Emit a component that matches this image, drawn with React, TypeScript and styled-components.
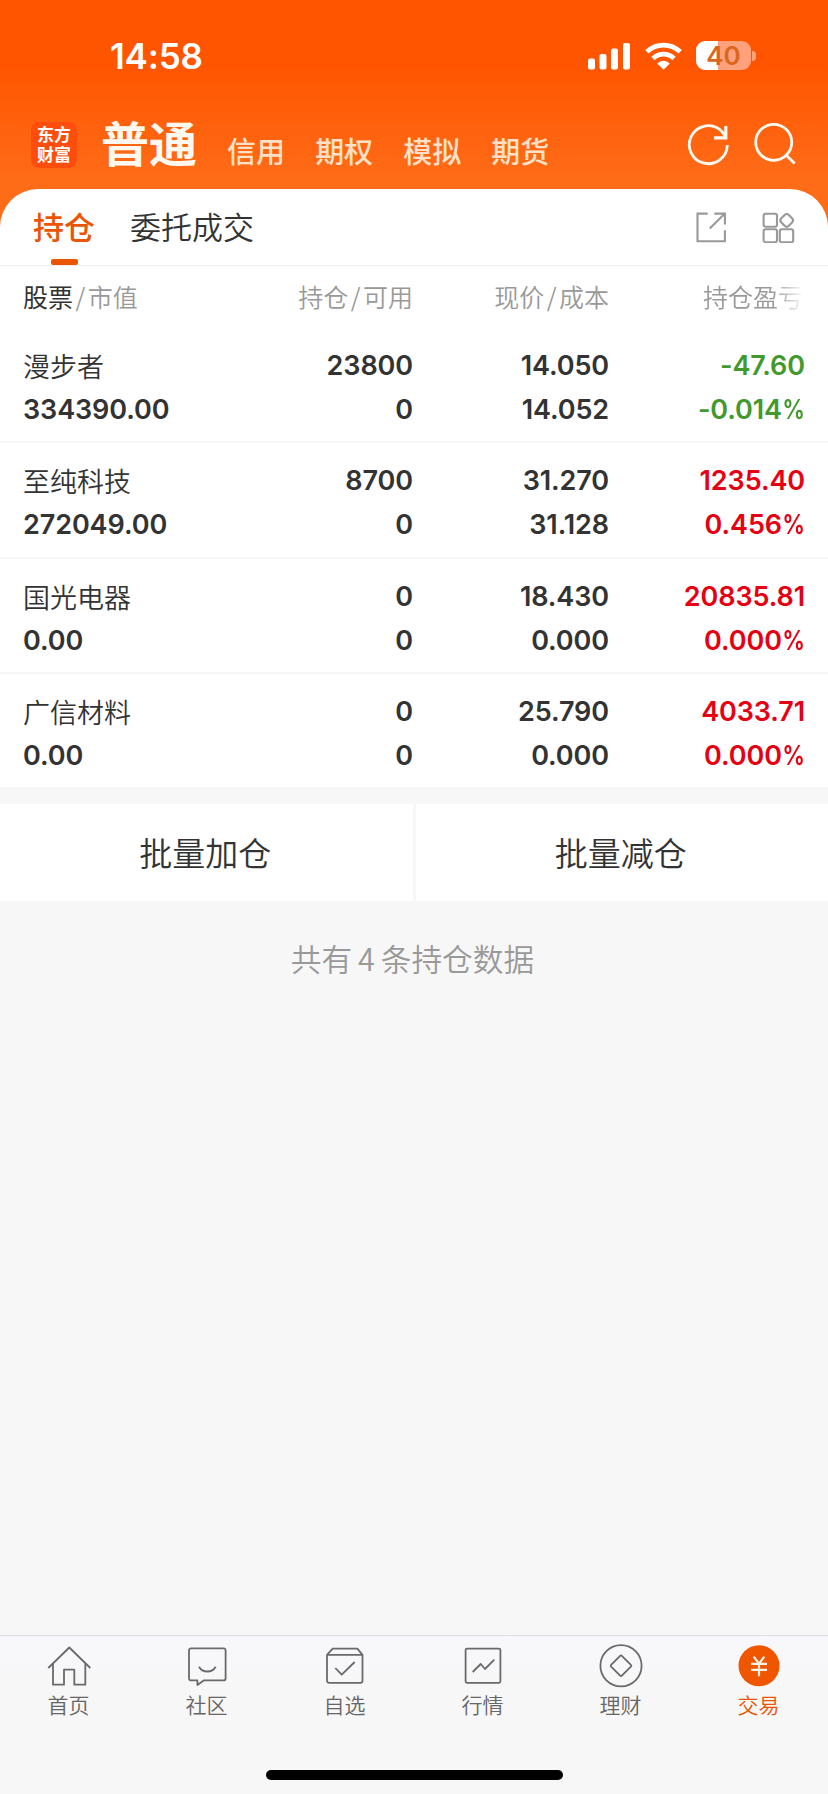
import React from "react";
import styled, { createGlobalStyle } from "styled-components";

const GlobalStyle = createGlobalStyle`
  * { box-sizing: border-box; }
  body { margin: 0; background: #f7f7f7; }
`;

const latin = `Inter, "Noto Sans CJK SC", sans-serif`;
const cjk = `"Noto Sans CJK SC", sans-serif`;

const Page = styled.div`
  width: 828px;
  height: 1794px;
  display: flex;
  flex-direction: column;
  overflow: hidden;
  font-family: ${cjk};
  color: #333;
  white-space: nowrap;
  background: linear-gradient(#ff5500 0, #ff5500 66px, #ff6c18 180px, #ff6c18 240px, #f7f7f7 240px);
`;

const StatusBar = styled.div`
  height: 98px;
  padding: 13px 72px 0 110px;
  display: flex;
  align-items: center;
  justify-content: space-between;
`;

const Clock = styled.div`
  font: 560 35px/40px ${latin};
  letter-spacing: -0.2px;
  color: #fff;
`;

const StatusIcons = styled.div`
  display: flex;
  align-items: center;
  gap: 14.5px;
  svg { display: block; }
`;

const Battery = styled.div`
  display: flex;
  align-items: center;
  gap: 1px;
`;

const BatteryBody = styled.div`
  width: 55px;
  height: 29px;
  border-radius: 9px;
  background: linear-gradient(90deg, #fff 22px, #ffa27c 22px);
  color: #dc661c;
  font: 600 26px/29px ${latin};
  text-align: center;
`;

const BatteryTip = styled.div`
  width: 4px;
  height: 10px;
  border-radius: 0 5px 5px 0;
  background: #ffa27c;
`;

const AccountBar = styled.div`
  height: 91px;
  padding: 0 31px;
  display: flex;
  align-items: flex-start;
`;

const Logo = styled.div`
  width: 46px;
  height: 46px;
  margin-top: 24px;
  padding-top: 2px;
  border-radius: 8px;
  background: #ff4d0d;
  color: #fff;
  font: 700 17px/20px ${cjk};
  text-align: center;
`;

const LogoLine = styled.span`
  display: block;
  height: 20px;
`;

const ActiveAccount = styled.div`
  margin: 14px 0 0 24px;
  font-size: 48px;
  line-height: 58px;
  font-weight: 700;
  color: #fff8ef;
`;

const Accounts = styled.div`
  display: flex;
  gap: 30.3px;
  margin: 31.5px auto 0 30px;
  font-size: 29px;
  line-height: 40px;
  font-weight: 500;
  letter-spacing: -0.1px;
  color: #ffe0c8;
`;

const AccountActions = styled.div`
  display: flex;
  gap: 23.5px;
  margin-top: 24px;
  svg { display: block; }
`;

const Sheet = styled.main`
  background: #fff;
  border-radius: 38px 38px 0 0;
`;

const TabBar = styled.div`
  height: 77px;
  padding: 0 32px 0 33px;
  display: flex;
  align-items: stretch;
  border-bottom: 1px solid #eee;
`;

const Tab = styled.div<{ $active?: boolean }>`
  display: flex;
  flex-direction: column;
  align-items: center;
  justify-content: space-between;
  margin-right: 35px;
  padding-top: 15px;
  font-size: 31px;
  line-height: 44px;
  font-weight: ${(p) => (p.$active ? 500 : 350)};
  color: ${(p) => (p.$active ? "#ea5504" : "#333")};
  &::after {
    content: "";
    width: 27px;
    height: 6px;
    border-radius: 2px;
    background: ${(p) => (p.$active ? "#ea5504" : "transparent")};
  }
`;

const TabActions = styled.div`
  display: flex;
  gap: 35px;
  margin: 22px 0 0 auto;
  svg { display: block; }
`;

const Grid = styled.div`
  display: grid;
  grid-template-columns: 201px 189px 196px 196px;
  padding: 0 23px;
`;

const TableHead = styled(Grid)`
  height: 62px;
  padding-top: 9.5px;
  font-size: 25px;
  line-height: 40px;
  font-weight: 350;
  color: #999;
`;

const HeadCell = styled.div<{ $right?: boolean; $fade?: boolean }>`
  display: flex;
  gap: 2.5px;
  justify-content: ${(p) => (p.$right ? "flex-end" : "flex-start")};
  ${(p) =>
    p.$fade &&
    `margin-left: 94px; overflow: hidden; justify-content: flex-start;
     mask-image: linear-gradient(90deg, #000 70px, transparent 102px);`}
`;

const HeadMain = styled.span`
  color: #333;
  font-weight: 400;
`;

const Position = styled(Grid)`
  height: 115.3px;
  padding-top: 16px;
  border-bottom: 2px solid #f5f5f5;
  grid-auto-rows: 44px;
`;

const Name = styled.div`
  font-size: 27px;
  line-height: 43px;
  font-weight: 350;
`;

const tones = { up: "#e60012", down: "#439a2c", plain: "#333" };

const Figure = styled.div<{ $tone?: keyof typeof tones; $left?: boolean }>`
  font: 560 27px/44px ${latin};
  letter-spacing: -0.1px;
  text-align: ${(p) => (p.$left ? "left" : "right")};
  color: ${(p) => tones[p.$tone ?? "plain"]};
`;

const PercentSign = styled.span`
  display: inline-block;
  margin-left: -4px;
  transform: scaleX(0.84);
  transform-origin: right;
`;

const BatchActions = styled.div`
  display: flex;
  gap: 3px;
  height: 97px;
  margin-top: 15px;
`;

const BatchButton = styled.button`
  flex: 1;
  border: 0;
  padding: 0 2px 1px 0;
  background: #fff;
  font: 350 33px/44px ${cjk};
  color: #333;
`;

const Summary = styled.p`
  margin: 35px 0 0;
  padding-right: 3px;
  text-align: center;
  font-size: 30.7px;
  line-height: 44px;
  font-weight: 350;
  color: #999;
  word-spacing: -1px;
`;

const BottomNav = styled.nav`
  height: 159px;
  margin-top: auto;
  border-top: 1px solid #dfdfe3;
  background: linear-gradient(#f8f8fc, #f7f7f7 60px);
  display: flex;
  flex-direction: column;
  align-items: center;
  justify-content: space-between;
`;

const NavItems = styled.div`
  display: flex;
  width: 100%;
`;

const NavItem = styled.div<{ $active?: boolean }>`
  flex: 1;
  display: flex;
  flex-direction: column;
  align-items: center;
  padding-top: 6px;
  color: ${(p) => (p.$active ? "#ea5504" : "#666")};
  svg { display: block; }
`;

const NavLabel = styled.span`
  font-size: 21px;
  line-height: 28px;
  font-weight: 350;
  margin-right: 1px;
`;

const HomeIndicator = styled.div`
  width: 297px;
  height: 10px;
  margin-bottom: 14.5px;
  border-radius: 5px;
  background: #000;
`;

const SignalIcon = () => (
  <svg width="42" height="28" viewBox="0 0 42 28" fill="#fff">
    <rect x="0" y="16.5" width="7" height="11" rx="2" />
    <rect x="11.5" y="12" width="7" height="15.5" rx="2" />
    <rect x="23" y="6.5" width="7" height="21" rx="2" />
    <rect x="35" y="1" width="7" height="26.5" rx="2" />
  </svg>
);

const WifiIcon = () => (
  <svg width="37" height="28" viewBox="0 0 37 28">
    <g fill="none" stroke="#fff" strokeWidth="4.8">
      <path d="M1.8 9.8a24 24 0 0 1 33.4 0" />
      <path d="M8 16.4a15.2 15.2 0 0 1 21 0" />
    </g>
    <path d="M12.2 21.4a9 9 0 0 1 12.6 0L18.5 27.8z" fill="#fff" />
  </svg>
);

const RefreshIcon = () => (
  <svg width="44" height="46" viewBox="0 0 44 46" fill="none" stroke="#fffaf4" strokeWidth="2.8">
    <path d="M41.3 23A19 19 0 1 1 33.6 7.4Q37 10 39.4 14.6" />
    <path d="M39.8 4v11.8H28" strokeWidth="3.2" />
  </svg>
);

const SearchIcon = () => (
  <svg width="44" height="46" viewBox="0 0 44 46" fill="none" stroke="#fffaf4" strokeWidth="2.8">
    <circle cx="20.7" cy="20.3" r="18" />
    <path d="M33 33l8.6 8.6" />
  </svg>
);

const ShareIcon = () => (
  <svg width="32" height="32" viewBox="0 0 32 32" fill="none" stroke="#999" strokeWidth="2.1">
    <path d="M12.7 2.6H2.5v27.6h27.4V19.2" />
    <path d="M14.8 17.6L29.6 2.8M19.3 2.6h10.6V13.4" />
  </svg>
);

const GridIcon = () => (
  <svg width="34" height="32" viewBox="0 0 34 32" fill="none" stroke="#999" strokeWidth="2.1">
    <rect x="1.6" y="2.7" width="13.4" height="13" rx="2" />
    <rect x="1.6" y="18.2" width="13.4" height="13" rx="2" />
    <rect x="17.8" y="18.2" width="13.4" height="13" rx="2" />
    <rect x="19.4" y="4.1" width="10.6" height="10.6" rx="3" transform="rotate(45 24.7 9.4)" />
  </svg>
);

const NavIcon = ({ children }: { children: React.ReactNode }) => (
  <svg width="48" height="48" viewBox="0 0 48 48" fill="none" stroke="#6a6a6a" strokeWidth="1.8" strokeLinejoin="round">
    {children}
  </svg>
);

const navItems = [
  {
    label: "首页",
    icon: (
      <>
        <path d="M3.3 26L24.3 5.5 45.3 26" />
        <path d="M8 22v20.7h11v-15h10.3v15h11V22" />
      </>
    ),
  },
  {
    label: "社区",
    icon: (
      <>
        <path d="M8 6.4h32.6a2 2 0 0 1 2 2v28a2 2 0 0 1-2 2H20.7L14.4 43v-4.6H8a2 2 0 0 1-2-2v-28a2 2 0 0 1 2-2z" />
        <path d="M16 24.7c3.6 6.4 13 6.4 16.7 0" />
      </>
    ),
  },
  {
    label: "自选",
    icon: (
      <>
        <path d="M6 12.8L11.7 6.7h24.6l5.2 6.1" />
        <path d="M6 12.8h35.5v26a2 2 0 0 1-2 2H8a2 2 0 0 1-2-2z" />
        <path d="M14.3 26l6.4 6.7L33.7 20" />
      </>
    ),
  },
  {
    label: "行情",
    icon: (
      <>
        <rect x="6.6" y="6.6" width="34.8" height="34.2" rx="1.5" />
        <path d="M13.7 30l8-8 4.3 5 9.3-9.3" />
      </>
    ),
  },
  {
    label: "理财",
    icon: (
      <>
        <circle cx="24" cy="23.7" r="20.6" />
        <rect x="16.4" y="16.1" width="15.2" height="15.2" rx="1.2" transform="rotate(45 24 23.7)" />
      </>
    ),
  },
  {
    label: "交易",
    active: true,
    icon: (
      <>
        <circle cx="24" cy="23.7" r="20.5" fill="#f05500" stroke="none" />
        <path d="M18.7 14.6L24 21.7l5.3-7.1M24 21.7V34.2M16 21.8h16M16 27.8h16" stroke="#fff3e6" strokeWidth="2.2" />
      </>
    ),
  },
];

type Tone = "up" | "down";

const positions: { name: string; value: string; held: string; free: string; price: string; cost: string; profit: string; rate: string; tone: Tone }[] = [
  { name: "漫步者", value: "334390.00", held: "23800", free: "0", price: "14.050", cost: "14.052", profit: "-47.60", rate: "-0.014", tone: "down" },
  { name: "至纯科技", value: "272049.00", held: "8700", free: "0", price: "31.270", cost: "31.128", profit: "1235.40", rate: "0.456", tone: "up" },
  { name: "国光电器", value: "0.00", held: "0", free: "0", price: "18.430", cost: "0.000", profit: "20835.81", rate: "0.000", tone: "up" },
  { name: "广信材料", value: "0.00", held: "0", free: "0", price: "25.790", cost: "0.000", profit: "4033.71", rate: "0.000", tone: "up" },
];

export default function App() {
  return (
    <Page>
      <GlobalStyle />
      <StatusBar>
        <Clock>14:58</Clock>
        <StatusIcons>
          <SignalIcon />
          <WifiIcon />
          <Battery>
            <BatteryBody>40</BatteryBody>
            <BatteryTip />
          </Battery>
        </StatusIcons>
      </StatusBar>
      <AccountBar>
        <Logo>
          <LogoLine>东方</LogoLine>
          <LogoLine>财富</LogoLine>
        </Logo>
        <ActiveAccount>普通</ActiveAccount>
        <Accounts>
          {["信用", "期权", "模拟", "期货"].map((a) => (
            <span key={a}>{a}</span>
          ))}
        </Accounts>
        <AccountActions>
          <RefreshIcon />
          <SearchIcon />
        </AccountActions>
      </AccountBar>
      <Sheet>
        <TabBar>
          <Tab $active>持仓</Tab>
          <Tab>委托成交</Tab>
          <TabActions>
            <ShareIcon />
            <GridIcon />
          </TabActions>
        </TabBar>
        <TableHead>
          <HeadCell>
            <HeadMain>股票</HeadMain>
            <span>/</span>
            <span>市值</span>
          </HeadCell>
          <HeadCell $right>
            <span>持仓</span>
            <span>/</span>
            <span>可用</span>
          </HeadCell>
          <HeadCell $right>
            <span>现价</span>
            <span>/</span>
            <span>成本</span>
          </HeadCell>
          <HeadCell $fade>持仓盈亏</HeadCell>
        </TableHead>
        {positions.map((p) => (
          <Position key={p.name}>
            <Name>{p.name}</Name>
            <Figure>{p.held}</Figure>
            <Figure>{p.price}</Figure>
            <Figure $tone={p.tone}>{p.profit}</Figure>
            <Figure $left>{p.value}</Figure>
            <Figure>{p.free}</Figure>
            <Figure>{p.cost}</Figure>
            <Figure $tone={p.tone}>
              {p.rate}
              <PercentSign>%</PercentSign>
            </Figure>
          </Position>
        ))}
      </Sheet>
      <BatchActions>
        <BatchButton>批量加仓</BatchButton>
        <BatchButton>批量减仓</BatchButton>
      </BatchActions>
      <Summary>共有 4 条持仓数据</Summary>
      <BottomNav>
        <NavItems>
          {navItems.map((n) => (
            <NavItem key={n.label} $active={n.active}>
              <NavIcon>{n.icon}</NavIcon>
              <NavLabel>{n.label}</NavLabel>
            </NavItem>
          ))}
        </NavItems>
        <HomeIndicator />
      </BottomNav>
    </Page>
  );
}
